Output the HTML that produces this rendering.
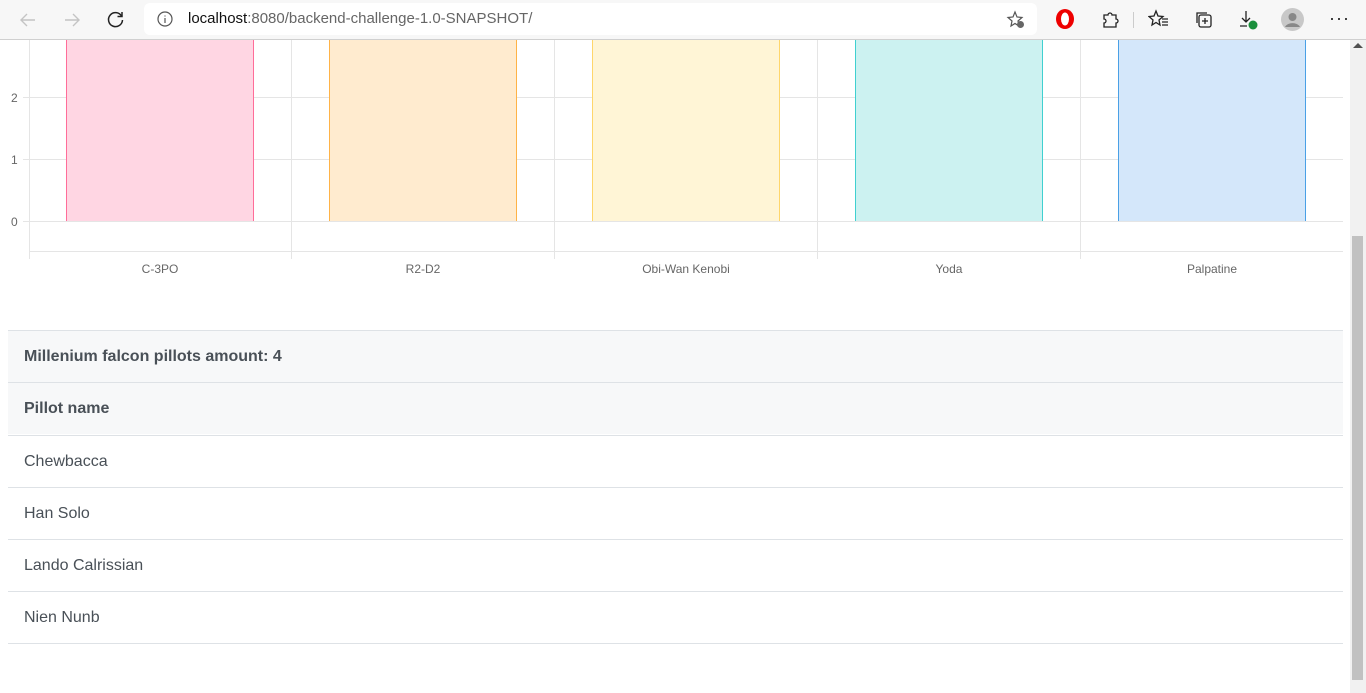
<!DOCTYPE html>
<html><head><style>
*{margin:0;padding:0;box-sizing:border-box}
body{width:1366px;height:693px;overflow:hidden;background:#fff;font-family:"Liberation Sans",sans-serif;position:relative}
.tb{position:absolute;left:0;top:0;width:1366px;height:40px;background:#f7f7f7;border-bottom:1px solid #d0d0d0}
.url{position:absolute;left:144px;top:3px;width:893px;height:32px;background:#fff;border-radius:6px}
.abs{position:absolute}
.sb{position:absolute;left:1350px;top:40px;width:16px;height:653px;background:#f1f1f1}
.thumb{position:absolute;left:1352px;top:236px;width:11px;height:444px;background:#c1c1c1;border-radius:0}
.row{position:absolute;left:8px;width:1335px;height:52px;border-top:1px solid #dee2e6;color:#495057;font-size:16px;padding-left:16px;line-height:52px}
.h{background:#f7f8f9;font-weight:bold}
</style></head><body>
<div class="tb">
<svg class="abs" style="left:18px;top:10px" width="20" height="20" fill="none" stroke="#c4c4c4" stroke-width="1.4"><path d="M17 10H3M9 4L3 10L9 16"/></svg>
<svg class="abs" style="left:62px;top:10px" width="20" height="20" fill="none" stroke="#c4c4c4" stroke-width="1.4"><path d="M3 10H17M11 4L17 10L11 16"/></svg>
<svg class="abs" style="left:106px;top:9px" width="20" height="20" fill="none" stroke="#222" stroke-width="1.5"><path d="M15.5 7A7 7 0 1 0 16.5 11"/><path d="M16 3V7.5H11.5"/></svg>
<div class="url">
<svg class="abs" style="left:13px;top:8px" width="16" height="16" fill="none" stroke="#555" stroke-width="1.2"><circle cx="8" cy="8" r="7"/><path d="M8 7V12M8 4.5V5.5"/></svg>
<div class="abs" style="left:44px;top:7px;font-size:15px;color:#666"><span style="color:#111">localhost</span>:8080/backend-challenge-1.0-SNAPSHOT/</div>
<svg class="abs" style="left:862px;top:7px" width="20" height="20" fill="none" stroke="#555" stroke-width="1.2"><path d="M9 2L11 7L16 7.5L12 11L13 16L9 13.5L5 16L6 11L2 7.5L7 7Z"/><circle cx="14.5" cy="14.5" r="3.5" fill="#666" stroke="none"/></svg>
</div>
<svg class="abs" style="left:1055px;top:8px" width="20" height="22"><ellipse cx="10" cy="11" rx="9" ry="10" fill="#e00"/><ellipse cx="10" cy="11" rx="4" ry="6.5" fill="#fff"/></svg>
<svg class="abs" style="left:1100px;top:9px" width="20" height="20" fill="none" stroke="#222" stroke-width="1.3"><path d="M4 6H8A2 2 0 0 1 12 6H16V10A2 2 0 0 1 16 14V18H4V14A2 2 0 0 0 4 10Z"/></svg>
<div class="abs" style="left:1133px;top:12px;width:1px;height:16px;background:#ccc"></div>
<svg class="abs" style="left:1148px;top:9px" width="22" height="20" fill="none" stroke="#222" stroke-width="1.3"><path d="M8 2L10 7L15 7.5L11 11L12 16L8 13.5L4 16L5 11L1 7.5L6 7Z"/><path d="M14 10H20M14 13H20M14 16H20"/></svg>
<svg class="abs" style="left:1193px;top:9px" width="20" height="20" fill="none" stroke="#222" stroke-width="1.3"><rect x="6" y="6" width="12" height="12" rx="2"/><path d="M12 9V15M9 12H15M4 14V4H14"/></svg>
<svg class="abs" style="left:1238px;top:9px" width="22" height="22" fill="none" stroke="#222" stroke-width="1.3"><path d="M8 2V13M4 9L8 13L12 9M2 17H9"/><circle cx="15" cy="16" r="4.5" fill="#1a8f3c" stroke="none"/></svg>
<svg class="abs" style="left:1281px;top:8px" width="23" height="23"><circle cx="11.5" cy="11.5" r="11.5" fill="#c8c8c8"/><circle cx="11.5" cy="9" r="4" fill="#888"/><path d="M4 19A8 6 0 0 1 19 19Z" fill="#888"/></svg>
<div class="abs" style="left:1329px;top:8px;font-size:18px;color:#222;letter-spacing:1px">···</div>
</div>
<svg class="abs" style="left:0;top:40px" width="1350" height="240" font-family="Liberation Sans" font-size="12" fill="#666">
<g stroke="#e5e5e5" stroke-width="1">
<line x1="23" y1="57.5" x2="1343" y2="57.5"/><line x1="23" y1="119.5" x2="1343" y2="119.5"/><line x1="23" y1="181.5" x2="1343" y2="181.5"/><line x1="29" y1="211.5" x2="1343" y2="211.5"/>
<line x1="29.5" y1="0" x2="29.5" y2="219"/><line x1="291.5" y1="0" x2="291.5" y2="219"/><line x1="554.5" y1="0" x2="554.5" y2="219"/><line x1="817.5" y1="0" x2="817.5" y2="219"/><line x1="1080.5" y1="0" x2="1080.5" y2="219"/>
</g>
<rect x="66" y="0" width="188" height="181" fill="#ffd6e3"/><path d="M66.5 0V181M253.5 0V181" stroke="#ff6d99"/>
<rect x="329" y="0" width="188" height="181" fill="#ffebcf"/><path d="M329.5 0V181M516.5 0V181" stroke="#ffb347"/>
<rect x="592" y="0" width="188" height="181" fill="#fff5d6"/><path d="M592.5 0V181M779.5 0V181" stroke="#ffd66b"/>
<rect x="855" y="0" width="188" height="181" fill="#ccf2f1"/><path d="M855.5 0V181M1042.5 0V181" stroke="#40d0d0"/>
<rect x="1118" y="0" width="188" height="181" fill="#d4e7fa"/><path d="M1118.5 0V181M1305.5 0V181" stroke="#4aa0e6"/>
<text x="11" y="62">2</text><text x="11" y="124">1</text><text x="11" y="186">0</text>
<g text-anchor="middle"><text x="160" y="233">C-3PO</text><text x="423" y="233">R2-D2</text><text x="686" y="233">Obi-Wan Kenobi</text><text x="949" y="233">Yoda</text><text x="1212" y="233">Palpatine</text></g>
</svg>
<div class="row h" style="top:330px">Millenium falcon pillots amount: 4</div>
<div class="row h" style="top:382px">Pillot name</div>
<div class="row" style="top:435px">Chewbacca</div>
<div class="row" style="top:487px">Han Solo</div>
<div class="row" style="top:539px">Lando Calrissian</div>
<div class="row" style="top:591px;border-bottom:1px solid #dee2e6;height:53px">Nien Nunb</div>
<div class="sb"></div><div class="thumb"></div>
<div class="abs" style="left:1353px;top:43px;width:0;height:0;border-left:5px solid transparent;border-right:5px solid transparent;border-bottom:5px solid #505050"></div>
</body></html>
